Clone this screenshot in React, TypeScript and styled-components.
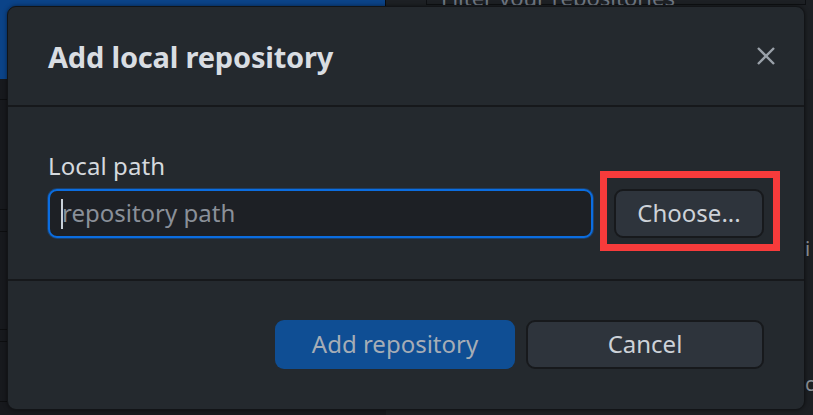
import React from "react";
import styled, { createGlobalStyle } from "styled-components";

const Global = createGlobalStyle`
  html, body { margin: 0; padding: 0; background: #1b1e22; }
  body { font-family: "Noto Sans", "Open Sans", sans-serif; overflow: hidden; }
  * { box-sizing: border-box; }
`;

const Page = styled.div`
  position: relative;
  width: 813px;
  height: 415px;
  overflow: hidden;
  background: #181a1e;
  display: flex;
  flex-direction: column;
`;

const TopRow = styled.div`
  display: flex;
  height: 79px;
  flex-shrink: 0;
`;

const RepoButton = styled.div`
  width: 386px;
  background: #0b4388;
  border-right: 1px solid #0a0c0f;
`;

const TopRest = styled.div`
  flex: 1;
  display: flex;
  flex-direction: column;
  background: #1d2024;
`;

const FilterStrip = styled.div`
  height: 5px;
  overflow: hidden;
  display: flex;
  align-items: flex-end;
  padding-left: 40px;
`;

const FilterBox = styled.div`
  flex-shrink: 0;
  width: 380px;
  height: 40px;
  border: 1px solid #0e1013;
  border-top: none;
  padding: 0 14px;
  display: flex;
  align-items: flex-end;
  font-size: 22px;
  line-height: 14px;
  color: #6f7782;
`;

const Content = styled.div`
  flex: 1;
  display: flex;
`;

const SideList = styled.div`
  width: 386px;
  display: flex;
  flex-direction: column;
  background: #17191d;
`;

const ListRow = styled.div<{ $h: number }>`
  height: ${(p) => p.$h}px;
  border-bottom: 1px solid #0d0e10;
  flex-shrink: 0;
  display: flex;
  align-items: center;
  justify-content: flex-end;
  font-size: 20px;
  color: #8f8a86;
  overflow: hidden;
`;

const MainArea = styled.div`
  flex: 1;
  background: #1c1f23;
  display: flex;
  flex-direction: column;
  align-items: flex-end;
  font-size: 20px;
  color: #8b9199;
`;

const RightText = styled.div<{ $mt: number }>`
  margin-top: ${(p) => p.$mt}px;
  width: 8px;
  overflow: hidden;
  white-space: nowrap;
`;

const BottomText = styled.div`
  position: absolute;
  left: 14px;
  bottom: -20px;
  font-size: 18px;
  color: #767b83;
  white-space: nowrap;
`;

/* Modal */
const Dialog = styled.div`
  position: absolute;
  left: 7px;
  top: 6px;
  width: 798px;
  height: 404px;
  background: #24292e;
  border: 1px solid #121417;
  border-radius: 9px;
  box-shadow: 0 0 4px rgba(0, 0, 0, 0.5);
  display: flex;
  flex-direction: column;
  color: #d1d5da;
`;

const Header = styled.div`
  height: 100px;
  flex-shrink: 0;
  border-bottom: 2px solid #16181b;
  display: flex;
  align-items: center;
  justify-content: space-between;
  padding: 0 27px 0 40px;
`;

const Title = styled.h1`
  margin: 0;
  font-size: 29px;
  font-weight: 700;
  color: #d9dde2;
  letter-spacing: -0.2px;
`;

const CloseButton = styled.button`
  width: 22px;
  height: 22px;
  padding: 0;
  background: none;
  border: none;
  display: flex;
  align-items: center;
  justify-content: center;
  color: #9aa1a9;
`;

const Body = styled.div`
  height: 174px;
  flex-shrink: 0;
  border-bottom: 2px solid #16181b;
  padding: 42px 40px 0 40px;
  display: flex;
  flex-direction: column;
`;

const Label = styled.label`
  font-size: 24px;
  line-height: 34px;
  color: #d5d9de;
  margin-bottom: 6px;
  letter-spacing: 0.1px;
`;

const FieldRow = styled.div`
  display: flex;
  gap: 21px;
`;

const InputWrap = styled.div`
  position: relative;
  flex: 1;
  height: 49px;
  &::before {
    content: "";
    position: absolute;
    left: 13px;
    top: 10px;
    width: 2px;
    height: 30px;
    background: #c9d1d9;
  }
`;

const TextInput = styled.input`
  width: 100%;
  height: 100%;
  background: #1d2025;
  border: 2px solid #0b6de0;
  box-shadow: 0 0 0 1px rgba(11, 109, 224, 0.35);
  border-radius: 9px;
  padding: 0 12px 2px 12px;
  font-family: inherit;
  font-size: 24px;
  color: #c9d1d9;
  outline: none;
  caret-color: transparent;
  &::placeholder {
    color: #8a9099;
  }
`;

const Highlight = styled.div`
  position: relative;
  &::after {
    content: "";
    position: absolute;
    left: -14px;
    top: -18px;
    right: -16px;
    bottom: -13px;
    border: 7px solid #f73b3b;
    pointer-events: none;
  }
`;

const Button = styled.button<{ $primary?: boolean; $w: number }>`
  width: ${(p) => p.$w}px;
  height: 49px;
  border-radius: 9px;
  font-family: inherit;
  font-size: 24px;
  padding: 0 0 2px 0;
  cursor: default;
  border: ${(p) => (p.$primary ? "none" : "2px solid #17191c")};
  background: ${(p) => (p.$primary ? "#0f4e94" : "#2e343c")};
  color: ${(p) => (p.$primary ? "#a6adb6" : "#cdd2d8")};
`;

const Footer = styled.div`
  flex: 1;
  display: flex;
  justify-content: flex-end;
  align-items: flex-start;
  gap: 11px;
  padding: 39px 40px 0 0;
`;

export default function App() {
  return (
    <>
      <Global />
      <Page>
        <TopRow>
          <RepoButton />
          <TopRest>
            <FilterStrip>
              <FilterBox>Filter your repositories</FilterBox>
            </FilterStrip>
          </TopRest>
        </TopRow>
        <Content>
          <SideList>
            <ListRow $h={21} />
            <ListRow $h={110}>r</ListRow>
            <ListRow $h={22} />
            <ListRow $h={98}>y</ListRow>
            <ListRow $h={12} />
            <ListRow $h={60} />
          </SideList>
          <MainArea>
            <RightText $mt={156}>i</RightText>
            <RightText $mt={108}>c</RightText>
          </MainArea>
        </Content>
        <BottomText>
          Set the default branch name for new repositories
        </BottomText>

        <Dialog role="dialog" aria-label="Add local repository">
          <Header>
            <Title>Add local repository</Title>
            <CloseButton aria-label="Close">
              <svg width="20" height="20" viewBox="0 0 20 20">
                <path
                  d="M2 2 L18 18 M18 2 L2 18"
                  stroke="currentColor"
                  strokeWidth="2.4"
                  strokeLinecap="butt"
                />
              </svg>
            </CloseButton>
          </Header>
          <Body>
            <Label>Local path</Label>
            <FieldRow>
              <InputWrap>
                <TextInput placeholder="repository path" readOnly />
              </InputWrap>
              <Highlight>
                <Button $w={150}>Choose...</Button>
              </Highlight>
            </FieldRow>
          </Body>
          <Footer>
            <Button $primary $w={240}>
              Add repository
            </Button>
            <Button $w={238}>Cancel</Button>
          </Footer>
        </Dialog>
      </Page>
    </>
  );
}
